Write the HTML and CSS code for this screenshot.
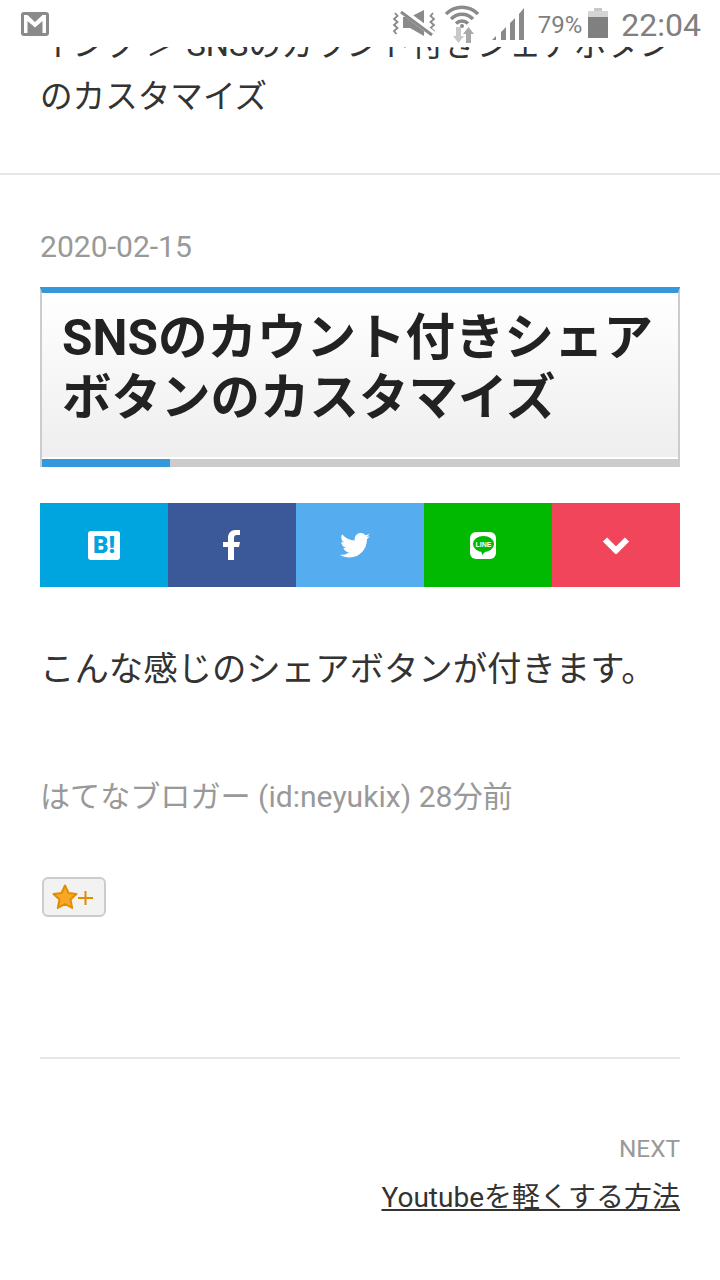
FILE: index.html
```html
<!DOCTYPE html>
<html lang="ja">
<head>
<meta charset="utf-8">
<title>SNSのカウント付きシェアボタンのカスタマイズ</title>
<link rel="stylesheet" href="styles.css">
</head>
<body>
<div class="status">
  <svg class="st-mail" width="30" height="26" viewBox="0 0 30 26"><rect x="1" y="0" width="28" height="24" rx="3" fill="#8a8a8a"/><path d="M4 21V3h3.500L15 10 22.500 3H26v18h-3.500V9L15 15.500 7.500 9v12z" fill="#fff"/></svg>
  <div class="st-right">
    <svg class="st-mute" width="46" height="32" viewBox="0 0 46 32"><path d="M4 5l2.500 3-3.500 3 3.500 3-3.500 3 3.500 3-3.500 3 2.500 3M42 5l-2.500 3 3.500 3-3.500 3 3.500 3-3.500 3 3.500 3-2.500 3" fill="none" stroke="#8a8a8a" stroke-width="1.800"/><path d="M12 9h7L33 2v26L19 20h-7z" fill="#8a8a8a"/><path d="M9 1l33 25" stroke="#fff" stroke-width="6"/><path d="M10 4l31 23" stroke="#8a8a8a" stroke-width="3"/></svg>
    <svg class="st-wifi" width="34" height="40" viewBox="0 0 34 40"><path d="M1 11C10 2 24 2 33 11" fill="none" stroke="#8a8a8a" stroke-width="3.500"/><path d="M6 16C12.500 9.500 21.500 9.500 28 16" fill="none" stroke="#8a8a8a" stroke-width="3.500"/><path d="M11 20.500C14.500 17 19.500 17 23 20.500" fill="none" stroke="#8a8a8a" stroke-width="3.500"/><circle cx="17" cy="23" r="2" fill="#8a8a8a"/><path d="M11 24h5v9h3l-5.500 7-5.500-7h3z" fill="#c8c8c8"/><path d="M21 40v-9h-3l5.500-7 5.500 7h-3v9z" fill="#a8a8a8"/></svg>
    <svg class="st-signal" width="34" height="33" viewBox="0 0 34 33"><path d="M1 32h4v-4l-4 4zM10 32h5V19l-5 5zM19 32h5V10l-5 5zM28 32h5V0l-5 6z" fill="#8a8a8a"/></svg>
    <span class="st-pct">79%</span>
    <svg class="st-batt" width="20" height="30" viewBox="0 0 20 30"><rect x="6" y="0" width="8" height="3" fill="#c8c8c8"/><rect x="0" y="3" width="20" height="6" fill="#d4d4d4"/><rect x="0" y="9" width="20" height="21" fill="#808080"/></svg>
    <span class="st-time">22:04</span>
  </div>
</div>

<main class="page">
  <div class="prev-title">インク ＞ SNSのカウント付きシェアボタンのカスタマイズ</div>
  <hr class="rule">
  <article class="entry">
    <div class="date">2020-02-15</div>
    <h1 class="headline">SNSのカウント付きシェアボタンのカスタマイズ</h1>
    <div class="share">
      <div class="share-btn hatena"><span class="hb">B!</span></div>
      <div class="share-btn fb"><svg width="18" height="30" viewBox="0 0 18 30"><path d="M5 30V17H0v-5h5V8c0-5 3-8 7.500-8H17v5h-3c-2 0-3 1-3 3v4h6l-1 5h-5v13z" fill="#fff"/></svg></div>
      <div class="share-btn tw"><svg width="30" height="25" viewBox="0 0 24 20"><path d="M24 2.400c-.9.400-1.800.7-2.800.8 1-.6 1.800-1.600 2.200-2.700-1 .6-2 1-3.100 1.200C19.300.7 18 0 16.600 0c-2.700 0-4.900 2.200-4.900 4.900 0 .4 0 .8.100 1.100C7.700 5.800 4.100 3.900 1.700.9c-.4.700-.7 1.600-.7 2.500 0 1.700.9 3.200 2.200 4.100-.8 0-1.600-.2-2.200-.6v.1c0 2.400 1.700 4.400 3.900 4.800-.4.100-.8.200-1.300.2-.3 0-.6 0-.9-.1.600 2 2.400 3.400 4.600 3.400-1.700 1.300-3.800 2.100-6.100 2.100-.4 0-.8 0-1.200-.1C2.200 18.700 4.800 19.500 7.500 19.500c9.100 0 14-7.500 14-14v-.6c1-.7 1.800-1.600 2.500-2.500z" fill="#fff"/></svg></div>
      <div class="share-btn line">
        <span class="line-box"><svg width="21" height="19" viewBox="0 0 21 19"><ellipse cx="10.500" cy="8" rx="10.500" ry="8" fill="#00b900"/><path d="M8 14h6l-5 5z" fill="#00b900"/><text x="10.500" y="10.800" class="line-text">LINE</text></svg></span>
      </div>
      <div class="share-btn more"><svg width="28" height="18" viewBox="0 0 28 18"><path d="M3 3.500l11 11 11-11" fill="none" stroke="#fff" stroke-width="6"/></svg></div>
    </div>
    <p class="body-text">こんな感じのシェアボタンが付きます。</p>
    <div class="meta">はてなブロガー (id:neyukix) 28分前</div>
    <div class="star-btn">
      <svg width="44" height="26" viewBox="0 0 44 26"><path d="M13 1.500l3.500 7.500 8 1-6 5.500 1.700 8.500L13 20l-7.200 4 1.700-8.500-6-5.500 8-1z" fill="#f9a825" stroke="#e08e00" stroke-width="2" stroke-linejoin="round"/><path d="M26 14h15M33.500 7v14" stroke="#e08e00" stroke-width="2"/></svg>
    </div>
  </article>
  <hr class="rule rule-inset">
  <nav class="next">
    <div class="next-label">NEXT</div>
    <a class="next-link">Youtubeを軽くする方法</a>
  </nav>
</main>
</body>
</html>
```
FILE: styles.css
```css
* { box-sizing: border-box; }
html, body { margin: 0; padding: 0; background: #fff; }
body {
  width: 720px;
  height: 1280px;
  overflow: hidden;
  position: relative;
  font-family: Roboto, "Noto Sans CJK JP", sans-serif;
  color: #222;
}
.status {
  position: absolute;
  top: 0; left: 0;
  width: 720px;
  height: 47px;
  background: #fff;
  z-index: 2;
  display: flex;
  justify-content: space-between;
  padding: 0 19px 0 20px;
}
.st-mail { margin-top: 12px; }
.st-right { display: flex; align-items: flex-start; height: 47px; }
.st-mute { margin-top: 8px; }
.st-wifi { margin: 3px 0 0 8px; }
.st-signal { margin: 8px 0 0 12px; }
.st-batt { margin-top: 8px; }
.st-pct { font-size: 24px; line-height: 28px; margin: 11px 6px 0 13px; color: #808080; white-space: nowrap; }
.st-time { font-size: 32px; line-height: 38px; margin: 6px 0 0 13px; color: #808080; white-space: nowrap; }

.page { padding-top: 19px; }
.prev-title {
  margin: 0 40px;
  padding-bottom: 50px;
  font-size: 32.600px;
  line-height: 52px;
  color: #333;
}
.rule { margin: 0; border: 0; height: 2px; background: #e6e6e6; }
.rule-inset { margin: 0 40px; }

.entry { padding: 0 40px; height: 882px; }
.date { padding-top: 54px; font-size: 30.100px; line-height: 36px; color: #999; height: 112px; }
.headline {
  position: relative;
  margin: 0;
  height: 180px;
  border-top: 6px solid #3498db;
  border-left: 2px solid #ccc;
  border-right: 2px solid #ccc;
  border-bottom: 8px solid #ccc;
  background: linear-gradient(#fff, #eee);
  box-shadow: inset 0 -2px 0 #fff;
  padding: 15px 0 0 20px;
  font-size: 49.500px;
  line-height: 60px;
  font-weight: 700;
  color: #222;
}
.headline::after {
  content: "";
  position: absolute;
  left: 0;
  bottom: -8px;
  width: 128px;
  height: 8px;
  background: #3498db;
}
.share { display: flex; margin-top: 36px; height: 84px; }
.share-btn { width: 128px; display: flex; align-items: center; justify-content: center; }
.hatena { background: #00a4de; }
.fb { background: #3b5998; }
.tw { background: #55acee; padding-right: 10px; }
.line { background: #00b900; padding-right: 10px; }
.more { background: #f0455a; }
.hb {
  width: 32px; height: 29px;
  background: #fff;
  border-radius: 3px;
  color: #00a4de;
  font: 900 24px/29px Roboto, sans-serif;
  text-align: center;
}
.line-box {
  width: 26px; height: 27px;
  background: #fff;
  border-radius: 6px;
  display: flex; align-items: center; justify-content: center;
}
.line-text { font: 700 7px "Liberation Sans", sans-serif; fill: #fff; text-anchor: middle; }
.body-text {
  margin: 57px 0 0;
  font-size: 34.400px;
  line-height: 50px;
  color: #333;
}
.meta { margin-top: 83px; font-size: 30.100px; line-height: 40px; color: #999; }
.star-btn {
  margin: 60px 0 0 2px;
  width: 64px; height: 40px;
  border: 2px solid #ccc;
  border-radius: 6px;
  background: #f2f2f2;
  padding: 5px 0 0 8px;
}
.star-btn svg { display: block; }
.next { margin-top: 72px; padding: 0 40px; text-align: right; }
.next-label { font-size: 24.400px; line-height: 36px; color: #999; }
.next-link { display: inline-block; margin-top: 11px; font-size: 28px; line-height: 40px; color: #333; text-decoration: underline; }
```
